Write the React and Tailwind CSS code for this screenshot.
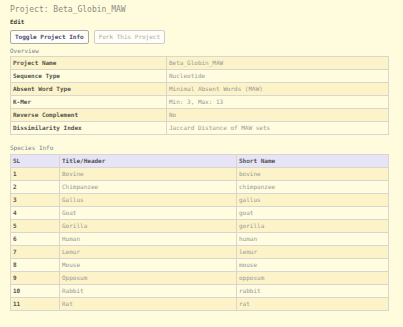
const overview = [
  ['Project Name', 'Beta_Globin_MAW'],
  ['Sequence Type', 'Nucleotide'],
  ['Absent Word Type', 'Minimal Absent Words (MAW)'],
  ['K-Mer', 'Min: 3, Max: 13'],
  ['Reverse Complement', 'No'],
  ['Dissimilarity Index', 'Jaccard Distance of MAW sets'],
]

const species = ['Bovine', 'Chimpanzee', 'Gallus', 'Goat', 'Gorilla', 'Human', 'Lemur', 'Mouse', 'Opposum', 'Rabbit', 'Rat']

export default function App() {
  return (
    <div className="min-h-[327px] bg-[#fffcdd] pl-[10px] pr-[14px] pt-[3px] font-['DejaVu_Sans_Mono',monospace] text-[6px] leading-none text-[#888]">
      <h1 className="text-[8px] leading-[13px] text-[#8c8a80]">Project: Beta_Globin_MAW</h1>
      <div className="mt-[3px] font-bold text-[#444]">Edit</div>
      <div className="mt-[5px] flex gap-[5px]">
        <button className="h-[14px] rounded-[2px] border border-[#aaa] bg-[#fffef6] px-[4px] font-bold text-[#4a4a7a]">Toggle Project Info</button>
        <button className="h-[14px] rounded-[2px] border border-[#ccc] bg-[#fffef6] px-[4px] text-[#aaa]">Fork This Project</button>
      </div>
      <div className="mt-[4px] text-[#7a7f90]">Overview</div>
      <table className="mt-[2px] w-full border-collapse border border-[#d8d6cf]">
        <tbody>
          {overview.map(([k, v], i) => (
            <tr key={k} className={i % 2 === 0 ? 'bg-[#fdf3c8]' : 'bg-[#fffcdf]'}>
              <td className="h-[13px] w-[156px] border border-[#d8d6cf] px-[2px] font-bold text-[#555]">{k}</td>
              <td className="h-[13px] border border-[#d8d6cf] px-[2px] text-[#999]">{v}</td>
            </tr>
          ))}
        </tbody>
      </table>
      <div className="mt-[10px] text-[#7a7f90]">Species Info</div>
      <table className="mt-[3px] w-full border-collapse border border-[#d8d6cf]">
        <thead>
          <tr className="bg-[#e6e4f6] text-left">
            <th className="h-[13px] w-[49px] border border-[#d8d6cf] px-[2px] font-bold text-[#555]">SL</th>
            <th className="h-[13px] w-[177px] border border-[#d8d6cf] px-[2px] font-bold text-[#555]">Title/Header</th>
            <th className="h-[13px] border border-[#d8d6cf] px-[2px] font-bold text-[#555]">Short Name</th>
          </tr>
        </thead>
        <tbody>
          {species.map((s, i) => (
            <tr key={s} className={i % 2 === 0 ? 'bg-[#fdf3c8]' : 'bg-[#fffcdf]'}>
              <td className="h-[13px] border border-[#d8d6cf] px-[2px] font-bold text-[#555]">{i + 1}</td>
              <td className="h-[13px] border border-[#d8d6cf] px-[2px] text-[#999]">{s}</td>
              <td className="h-[13px] border border-[#d8d6cf] px-[2px] text-[#999]">{s.toLowerCase()}</td>
            </tr>
          ))}
        </tbody>
      </table>
      <div className="mt-[16px] flex gap-[4px]">
        <button className="h-[14px] w-[63px] rounded-[2px] border border-[#aaa] bg-[#f4f2ea]"></button>
        <button className="h-[14px] w-[93px] rounded-[2px] border border-[#ccc] bg-[#f8f6ee]"></button>
        <button className="h-[14px] w-[61px] rounded-[2px] border border-[#ccc] bg-[#f8f6ee]"></button>
        <button className="h-[14px] w-[45px] rounded-[2px] border border-[#ccc] bg-[#f8f6ee]"></button>
      </div>
    </div>
  )
}
